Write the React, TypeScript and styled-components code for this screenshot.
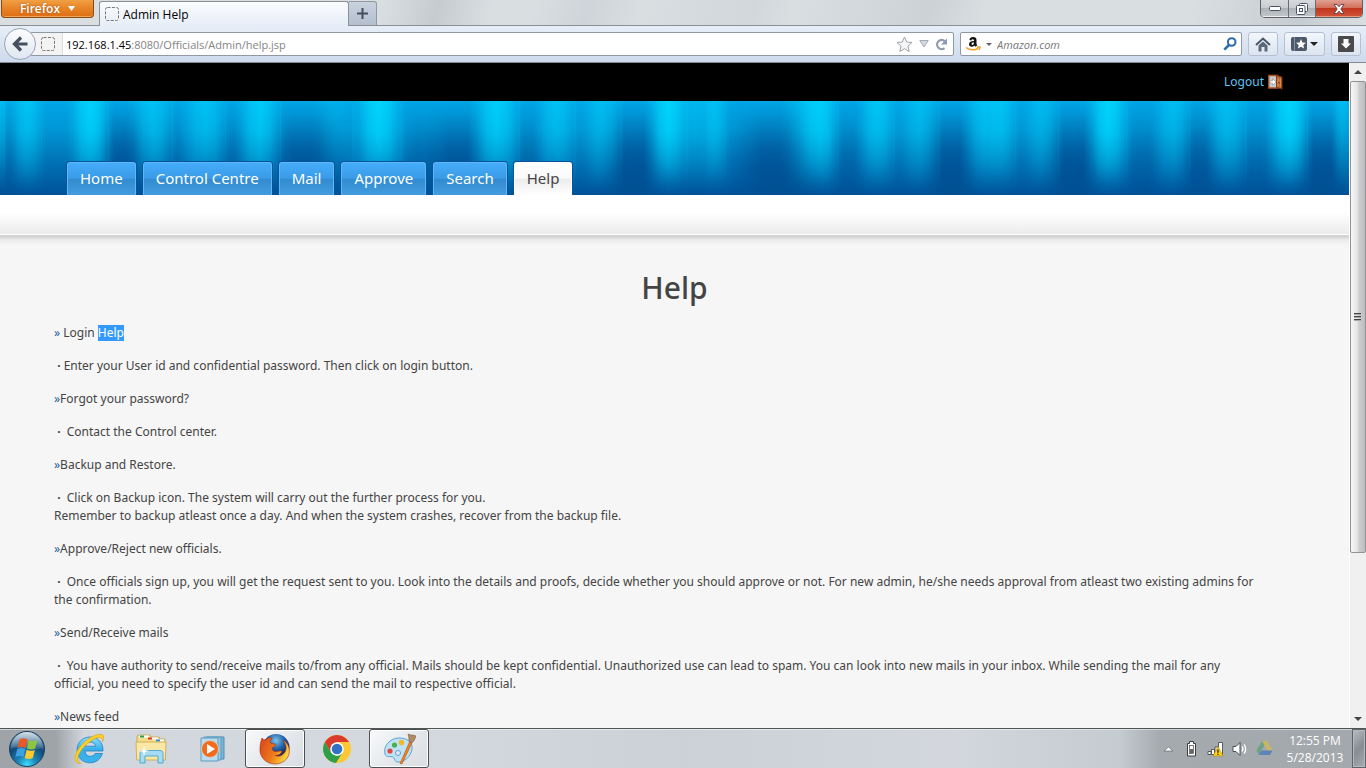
import React from 'react';
import styled, { createGlobalStyle, css } from 'styled-components';

const uiFont = "'Open Sans', 'Noto Sans', sans-serif";
const pageFont = "'Noto Sans', 'Open Sans', sans-serif";

const GlobalStyle = createGlobalStyle`
  *, *::before, *::after { box-sizing: border-box; }
  body { margin: 0; font-family: ${pageFont}; overflow: hidden; }
  button, input { font: inherit; color: inherit; }
  button { padding: 0; border: 0; background: none; cursor: pointer; }
  svg { display: block; flex: none; }
`;

const Screen = styled.div`
  display: flex;
  flex-direction: column;
  height: 100vh;
  font-family: ${uiFont};
  font-size: 11px;
`;

/* ---------- browser chrome ---------- */

const TitleBar = styled.header`
  flex: none;
  display: flex;
  align-items: flex-end;
  height: 26px;
  padding-right: 3px;
  border-bottom: 1px solid #8c9096;
  background:
    linear-gradient(105deg, transparent 0 28%, rgba(160, 170, 176, 0.35) 32%, transparent 36%, transparent 39%, rgba(190, 198, 204, 0.4) 43%, transparent 47%, rgba(200, 205, 212, 0.4) 55%, transparent 58%, rgba(185, 192, 198, 0.4) 68%, transparent 72%, transparent 87%, rgba(170, 180, 187, 0.4) 95%, transparent),
    #d9dee1;
`;

const FirefoxButton = styled.button`
  display: flex;
  align-items: center;
  align-self: flex-start;
  justify-content: center;
  gap: 8px;
  width: 93px;
  height: 18px;
  margin: 0 5px 0 1px;
  border: 1px solid #8c4a12;
  border-top: 0;
  border-radius: 0 0 4px 4px;
  background: linear-gradient(#f0a043, #e8862a 45%, #de6d12);
  box-shadow: inset 0 -1px 0 #f0a35c;
  color: #fff;
  font-size: 12px;
  font-weight: 600;
  line-height: 16px;
  text-shadow: 0 0 2px #8c4a12;
`;

const BrowserTab = styled.div`
  display: flex;
  align-items: center;
  gap: 4px;
  width: 250px;
  height: 25px;
  margin-bottom: -1px;
  padding: 0 5px;
  border: 1px solid #8c9096;
  border-bottom: 0;
  border-radius: 3px 3px 0 0;
  background: linear-gradient(#fbfcfe, #e6edf7);
  color: #000;
  font-size: 12px;
`;

const NewTab = styled.button`
  display: flex;
  align-items: center;
  justify-content: center;
  width: 28px;
  height: 24px;
  border: 1px solid #9299a3;
  border-width: 1px 1px 0 0;
  border-radius: 0 3px 0 0;
  background: linear-gradient(#c9d2df, #b4bfce);
`;

const WindowControls = styled.div`
  display: flex;
  align-self: flex-start;
  height: 18px;
  margin-left: auto;
  border: 1px solid #5d6167;
  border-top: 0;
  border-radius: 0 0 5px 5px;
  overflow: hidden;
`;

const WindowButton = styled.button<{ $close?: boolean }>`
  display: flex;
  align-items: center;
  justify-content: center;
  width: 27px;
  background: linear-gradient(#d7dadd, #c9cdd1 45%, #aeb3b8 50%, #c3c7cb);
  box-shadow: inset 0 -1px 0 #eceef0;
  & + & { border-left: 1px solid #6a6e74; }
  ${(p) => p.$close && css`
    width: 47px;
    background: linear-gradient(#e0a093, #d4705b 45%, #c0371d 50%, #d0553a);
    box-shadow: inset 0 -1px 0 #eb9a80;
  `}
`;

const NavBar = styled.div`
  flex: none;
  display: flex;
  align-items: center;
  gap: 6px;
  height: 37px;
  padding: 0 5px 0 4px;
  border-bottom: 1px solid #84888f;
  background: linear-gradient(#e7eef8, #cddaec);
`;

const BackButton = styled.button`
  z-index: 1;
  display: flex;
  align-items: center;
  justify-content: center;
  width: 32px;
  height: 32px;
  margin-right: -12px;
  border: 1px solid #9ba5b3;
  border-radius: 50%;
  background: linear-gradient(#fdfdfe, #dfe7f2);
`;

const Field = styled.form<{ $search?: boolean }>`
  display: flex;
  align-items: center;
  height: 24px;
  border: 1px solid #9098a3;
  border-radius: 2px;
  background: #fff;
  ${(p) => p.$search
    ? css`flex: 0 0 282px; gap: 5px; padding: 0 4px;`
    : css`flex: 1; gap: 6px; padding-right: 5px;`}
`;

const SiteIdentity = styled.button`
  display: flex;
  align-items: center;
  align-self: stretch;
  width: 32px;
  margin-right: -3px;
  padding-left: 10px;
  border-right: 1px solid #dcdcdc;
  background: #f3f3f3;
`;

const Address = styled.label`
  display: flex;
  flex: 1;
  color: #000;
`;

const TextInput = styled.input`
  flex: 1;
  min-width: 0;
  padding: 0;
  border: 0;
  outline: 0;
  background: none;
  color: #858585;
  &::placeholder { color: #777; font-style: italic; opacity: 1; }
`;

const IconButton = styled.button`
  display: flex;
  align-items: center;
`;

const ToolButton = styled.button<{ $wide?: boolean }>`
  display: flex;
  align-items: center;
  justify-content: center;
  gap: 3px;
  width: ${(p) => (p.$wide ? 41 : 30)}px;
  height: 24px;
  border: 1px solid #b5c1d2;
  border-radius: 3px;
  background: linear-gradient(#f3f7fc, #dbe4f0);
`;

/* ---------- web page ---------- */

const Viewport = styled.div`
  flex: 1;
  display: flex;
  min-height: 0;
`;

const Page = styled.div`
  flex: 1;
  min-width: 0;
  overflow: hidden;
  background: #f6f6f6;
  color: #444;
  font-family: ${pageFont};
  font-size: 12px;
  line-height: 18px;
`;

const TopBar = styled.div`
  display: flex;
  align-items: center;
  justify-content: flex-end;
  height: 38px;
  padding-right: 66px;
  background: #000;
`;

const Logout = styled.a`
  display: flex;
  align-items: center;
  gap: 4px;
  color: #5cc3f2;
  text-decoration: none;
`;

const Banner = styled.div`
  display: grid;
  height: 94px;
  overflow: hidden;
  & > * { grid-area: 1 / 1; }
`;

const Curtain = styled.svg`
  width: 100%;
  height: 94px;
`;

const Tabs = styled.nav`
  z-index: 1;
  display: flex;
  align-items: flex-end;
  gap: 7px;
  padding-left: 67px;
`;

const TabLink = styled.a<{ $active?: boolean }>`
  height: 33px;
  padding: 0 12px;
  border: 1px solid #5cb8fa;
  border-bottom: 0;
  border-radius: 3px 3px 0 0;
  background: linear-gradient(#45acfb, #3a9be6 48%, #318bce 50%, #429cdf);
  box-shadow: 0 0 0 1px #07549a;
  color: #fff;
  font-size: 15px;
  line-height: 30px;
  text-decoration: none;
  ${(p) => p.$active && css`
    border-color: #fff;
    background: linear-gradient(#fff, #f9f9f9 48%, #ececec 50%, #fff);
    color: #444;
  `}
`;

const SubBar = styled.div`
  height: 40px;
  border-bottom: 1px solid #fff;
  background: linear-gradient(#fff 45%, #ececec);
`;

const Main = styled.main`
  padding: 33px 54px 0;
  background: linear-gradient(#cfcfcf, #d6d6d6 2px, #ebebeb 5px, #f6f6f6 10px);
`;

const Heading = styled.h1`
  margin: 0 0 16px;
  font-size: 30px;
  font-weight: 500;
  line-height: 40px;
  text-align: center;
`;

const Paragraph = styled.p`
  margin: 0 0 15px;
`;

const Marker = styled.a`
  color: #1d5fa0;
  text-decoration: none;
`;

const Selected = styled.mark`
  display: inline-block;
  height: 16px;
  background: #3399ff;
  color: #fff;
  line-height: 16px;
`;

const ScrollBar = styled.div`
  flex: none;
  display: flex;
  flex-direction: column;
  width: 17px;
  border-left: 1px solid #fff;
  background: #f0f0f0;
`;

const ScrollArrow = styled.button`
  display: flex;
  align-items: center;
  justify-content: center;
  height: 18px;
`;

const ScrollTrack = styled.div`
  flex: 1;
`;

const ScrollThumb = styled.div`
  display: flex;
  align-items: center;
  justify-content: center;
  height: 75%;
  border: 1px solid #929292;
  border-radius: 2px;
  background: linear-gradient(90deg, #f6f6f6, #e4e4e6 45%, #cfcfd2 55%, #bcbcc0);
`;

/* ---------- taskbar ---------- */

const TaskBar = styled.footer`
  flex: none;
  display: flex;
  height: 40px;
  border-top: 1px solid #51554f;
  background:
    linear-gradient(90deg, #9fa4a8 0, #9fa4a8 56px, transparent 84px),
    linear-gradient(90deg, #d1d6de 0, #d4d9df 30%, #ccd1d8 50%, #d3d7dd 70%, #c4cbd1 82%, #a4aaae 85%, #a2a8ac 100%);
  box-shadow: inset 0 1px 0 rgba(255, 255, 255, 0.5);
`;

const StartButton = styled.button`
  display: flex;
  align-items: center;
  justify-content: center;
  width: 54px;
  margin-right: 5px;
`;

const TaskButton = styled.button<{ $open?: boolean }>`
  display: flex;
  align-items: center;
  justify-content: center;
  width: 60px;
  margin-right: 2px;
  border: 1px solid transparent;
  border-radius: 3px;
  ${(p) => p.$open && css`
    border-color: #4c5054;
    background: linear-gradient(135deg, #f8f9fa, #e2e6ea 60%, #dadee3);
    box-shadow: inset 0 0 0 1px #fff;
  `}
`;

const Tray = styled.div`
  display: flex;
  align-items: center;
  gap: 8px;
  margin-left: auto;
`;

const Clock = styled.time`
  width: 64px;
  margin: 0 5px 0 2px;
  color: #fff;
  font-size: 12px;
  line-height: 17px;
  text-align: center;
  white-space: nowrap;
`;

const ShowDesktop = styled.button`
  align-self: stretch;
  width: 14px;
  margin-left: -8px;
  border: 1px solid #5e6468;
  background: linear-gradient(135deg, #b9bec2, #868d92 50%, #a6acb0);
  box-shadow: inset 0 0 0 1px #b4b9bd;
`;

/* ---------- drawings ---------- */

const Caret = ({ color, w = 8, h = 5 }: { color: string; w?: number; h?: number }) => (
  <svg width={w} height={h} viewBox="0 0 8 5" preserveAspectRatio="none"><path d="M0 0h8L4 5z" fill={color} /></svg>
);

const BlankFavicon = () => (
  <svg width="14" height="14" viewBox="0 0 14 14">
    <rect x=".5" y=".5" width="13" height="13" rx="2" fill="none" stroke="#777" strokeDasharray="3 1.4" />
  </svg>
);

/* [centre, half width, strength] of each light fold */
const lights: [number, number, number][] = [
  [0, 10, 0.5], [27, 20, 0.65], [90, 24, 0.95], [152, 26, 0.6], [205, 26, 0.6], [260, 26, 0.8], [335, 24, 0.25], [379, 28, 1],
  [497, 28, 0.85], [557, 24, 0.6], [603, 24, 0.5], [669, 24, 1], [695, 20, 0.4], [715, 16, 0.6], [820, 24, 0.9],
  [805, 26, 0.4], [878, 22, 0.7], [921, 24, 0.5], [985, 24, 0.6], [1002, 20, 0.6], [1043, 22, 0.45], [1109, 24, 1],
  [1174, 22, 0.5], [1228, 24, 0.55], [1290, 24, 1], [1343, 12, 0.5],
];
const darks: [number, number, number][] = [
  [0, 24, 0.4], [125, 30, 1], [172, 16, 0.3], [232, 16, 0.4], [307, 46, 1], [425, 24, 0.5], [458, 32, 1], [528, 16, 0.4],
  [633, 34, 1], [776, 46, 1], [847, 18, 0.4], [951, 30, 1], [1074, 32, 1], [1143, 18, 0.4], [1200, 24, 0.8], [1256, 18, 0.3],
  [1325, 32, 1],
];

const CurtainArt = () => (
  <Curtain viewBox="0 0 1350 94" preserveAspectRatio="none" aria-hidden="true">
    <defs>
      <linearGradient id="cBase" x2="0" y2="1">
        <stop stopColor="#00a6e6" /><stop offset=".3" stopColor="#0097d6" />
        <stop offset=".65" stopColor="#0072b5" /><stop offset="1" stopColor="#005298" />
      </linearGradient>
      <linearGradient id="cLight">
        <stop stopColor="#00ccf6" stopOpacity="0" /><stop offset=".14" stopColor="#00ccf6" stopOpacity=".3" />
        <stop offset=".32" stopColor="#00d2fa" stopOpacity=".85" />
        <stop offset=".5" stopColor="#00d8ff" /><stop offset=".68" stopColor="#00d2fa" stopOpacity=".85" />
        <stop offset=".86" stopColor="#00ccf6" stopOpacity=".3" /><stop offset="1" stopColor="#00ccf6" stopOpacity="0" />
      </linearGradient>
      <linearGradient id="cDark">
        <stop stopColor="#004f93" stopOpacity="0" /><stop offset=".35" stopColor="#004f93" stopOpacity=".85" />
        <stop offset=".65" stopColor="#004f93" stopOpacity=".85" /><stop offset="1" stopColor="#004f93" stopOpacity="0" />
      </linearGradient>
      <linearGradient id="fadeDown" x2="0" y2="1">
        <stop stopColor="#eee" /><stop offset=".35" stopColor="#ccc" /><stop offset=".65" stopColor="#777" />
        <stop offset=".88" stopColor="#1c1c1c" /><stop offset="1" stopColor="#000" />
      </linearGradient>
      <linearGradient id="fadeUp" x2="0" y2="1">
        <stop stopColor="#000" /><stop offset=".15" stopColor="#2a2a2a" /><stop offset=".55" stopColor="#ccc" />
        <stop offset=".75" stopColor="#fff" />
      </linearGradient>
      <mask id="mDown"><rect width="1350" height="94" fill="url(#fadeDown)" /></mask>
      <mask id="mUp"><rect width="1350" height="94" fill="url(#fadeUp)" /></mask>
    </defs>
    <rect width="1350" height="94" fill="url(#cBase)" />
    <g mask="url(#mUp)">
      {darks.map(([c, r, o]) => <rect key={c} x={c - r} width={r * 2} height="94" fill="url(#cDark)" opacity={o} />)}
    </g>
    <g mask="url(#mDown)">
      {lights.map(([c, r, o]) => <rect key={c} x={c - r} width={r * 2} height="94" fill="url(#cLight)" opacity={o} />)}
      {lights.map(([c, r]) => <rect key={c} x={c + r - 6} width="1" height="94" fill="#19c4f4" opacity=".25" />)}
    </g>
  </Curtain>
);

const DoorIcon = () => (
  <svg width="15" height="16" viewBox="0 0 15 16">
    <path d="M.8 1.500h9v12.500h-9z" fill="#c9c9cf" stroke="#b0582a" strokeWidth="1.300" />
    <path d="M2 6.800h2.500V4.600L8.200 8l-3.700 3.400V9.200H2z" fill="#fff" stroke="#8a8a90" strokeWidth=".6" />
    <path d="M8.500 1.500l5.500 1.500v12l-5.500-1.500z" fill="#b9642c" stroke="#74350f" strokeWidth=".9" />
    <path d="M10 4v8.500M12.300 4.500v8.500" stroke="#dc9354" /><path d="M11 8v1.500" stroke="#4a1e05" />
  </svg>
);

const StartOrb = () => (
  <svg width="38" height="38" viewBox="0 0 38 38">
    <defs>
      <radialGradient id="orb" cx=".5" cy=".95" r=".9">
        <stop stopColor="#3fe0ff" /><stop offset=".3" stopColor="#1a86b8" /><stop offset=".65" stopColor="#134a78" /><stop offset="1" stopColor="#4a7ba0" />
      </radialGradient>
      <linearGradient id="orbShine" x2="0" y2="1"><stop stopColor="#fff" stopOpacity=".75" /><stop offset="1" stopColor="#fff" stopOpacity=".1" /></linearGradient>
    </defs>
    <circle cx="19" cy="19" r="17.500" fill="url(#orb)" stroke="#1d3f5c" />
    <path d="M3 18a16 16 0 0 1 32 0c-9 3-22-1-32 0z" fill="url(#orbShine)" />
    <path d="M11.500 9.500c3-1.700 5.500-1.300 8 0L17.700 17.800c-2.500-1.300-5-1.500-8-.2z" fill="#ea5a26" />
    <path d="M20.800 10c2.800 1.300 5.500 1.300 8.500.2L27.200 18.500c-2.700 1.200-5.500 1.200-8.200-.1z" fill="#8cc63e" />
    <path d="M9.300 19c2.800-1.400 5.500-1.200 8 .1l-1.900 8c-2.500-1.300-5.200-1.400-8-.1z" fill="#3fa0e0" />
    <path d="M18.600 19.800c2.700 1.300 5.500 1.300 8.300.1l-2.100 8.200c-2.700 1.200-5.500 1.200-8.100-.1z" fill="#fcc92e" />
  </svg>
);

const IeIcon = () => (
  <svg width="32" height="32" viewBox="0 0 32 32">
    <defs><linearGradient id="ie" x2="0" y2="1"><stop stopColor="#8edcf9" /><stop offset=".5" stopColor="#35aeea" /><stop offset="1" stopColor="#3bb4ec" /></linearGradient></defs>
    <path d="M30 18H12c.3 3.500 2.400 5.300 5.200 5.300 2.300 0 3.900-1 4.800-2.800h7.400C27.700 26.300 23 29.800 17 29.800 9.500 29.800 4 24.500 4 17S9.500 4 17 4s13 5.300 13 13zM22.500 13.200C22 10.700 20 9 17.200 9s-4.700 1.700-5.100 4.200z" fill="url(#ie)" stroke="#2583bf" strokeWidth=".8" fillRule="evenodd" />
    <path d="M8 30.500C0 31 .5 22 6.500 14.500 13 6 22.500.800 28 1.300c3.400.400 3.200 4 1.500 7.500.300-2.700-.500-4.300-3-4.300C21.500 4.500 13 10.500 8 17.500 4 23.500 3 29 8 30.500z" fill="#fbd127" stroke="#d9a010" strokeWidth=".6" />
  </svg>
);

const ExplorerIcon = () => (
  <svg width="34" height="32" viewBox="0 0 34 32">
    <path d="M3 6V3l2-1h11l1 2h8l1 2h5v6H3z" fill="#f5dc8a" stroke="#c39f3f" strokeWidth=".8" />
    <path d="M5 3.500h10M16 5.500h8M24 7.500h6" stroke="#fff" strokeWidth="2" />
    <path d="M6 3.500h4" stroke="#24a148" strokeWidth="2" /><path d="M14 5.500h4" stroke="#d9372a" strokeWidth="2" /><path d="M22 7.500h4" stroke="#2b8fe0" strokeWidth="2" />
    <path d="M2 9h30l-.7 18H2.700z" fill="#f9e7a6" stroke="#c9a548" strokeWidth=".8" />
    <path d="M6 30V20.500c0-2 1-3 3-3h17c2 0 3 1 3 3V30h-5v-7H11v7z" fill="#a5dcf3" stroke="#4ba3cd" strokeWidth=".9" />
    <path d="M10 13l1 4 4 1-4 1-1 4-1-4-4-1 4-1z" fill="#fff" />
  </svg>
);

const MediaIcon = () => (
  <svg width="30" height="28" viewBox="0 0 30 28">
    <path d="M9 2h17v22H9z" fill="#7db6d5" stroke="#4f8fb4" /><path d="M6 2h17v23H6z" fill="#9cc9e2" stroke="#5c9bbe" />
    <path d="M3 3h17v23H3z" fill="#b9dcee" stroke="#5c9bbe" />
    <circle cx="12" cy="14" r="8.500" fill="#f26a1b" stroke="#d9d9d9" strokeWidth=".8" /><path d="M9 9l8 5-8 5z" fill="#fff" />
  </svg>
);

const FirefoxIcon = () => (
  <svg width="32" height="32" viewBox="0 0 32 32">
    <defs>
      <radialGradient id="globe" cx=".5" cy=".25"><stop stopColor="#7cc4ee" /><stop offset=".6" stopColor="#2563a8" /><stop offset="1" stopColor="#16316c" /></radialGradient>
      <linearGradient id="fox" x2="1" y2=".4"><stop stopColor="#d8421a" /><stop offset=".6" stopColor="#ec7a1c" /><stop offset="1" stopColor="#fbd03a" /></linearGradient>
    </defs>
    <circle cx="17" cy="14.500" r="13.500" fill="url(#globe)" />
    <path d="M3 5c1 1.500 2 2 4 1.800C9 4.500 11 4.500 13 5l-2 3.500 1 2 4.500.5c.5 2-2 2.800-3.500 4 .2 3 2.500 4 5 3.500 2-.4 3.500-1 5-.2-1 3-4 4.500-7 4 5 2.500 10-1 11-6 .5-3-.5-6-3-9 4 2 5.500 5 6 8C32 24 25 31 16 31 7 31 0 24 1 15c0-4 1-7 2-10z" fill="url(#fox)" stroke="#a82f0f" strokeWidth=".6" />
  </svg>
);

const ChromeIcon = () => (
  <svg width="30" height="30" viewBox="0 0 30 30">
    <circle cx="15" cy="15" r="14" fill="#fcc934" />
    <path d="M15 8h12.100A14 14 0 0 0 2.900 8l6 10.500z" fill="#db3b2d" />
    <path d="M2.900 8A14 14 0 0 0 14 29l6.500-10.500L15 22l-6-3.500z" fill="#2f9e48" />
    <circle cx="15" cy="15" r="6.800" fill="#fff" /><circle cx="15" cy="15" r="5.300" fill="#2f74c4" />
  </svg>
);

const PaintIcon = () => (
  <svg width="34" height="32" viewBox="0 0 34 32">
    <path d="M17 5c8 0 14 4 13 11-1 8-8 13-14 13-4 0-3-4-5-5s-7 1-8-3C1 13 8 5 17 5z" fill="#bfe2f5" stroke="#5aa3d0" />
    <circle cx="16" cy="20" r="2.500" fill="#e6eaf0" stroke="#5aa3d0" />
    <circle cx="8" cy="18" r="2.600" fill="#e2483c" /><circle cx="12.500" cy="12" r="2.600" fill="#49b14b" /><circle cx="19.500" cy="9.500" r="2.700" fill="#f4b52a" />
    <path d="M27.500 9l2.300 1.200L20 31l-2-.5z" fill="#f08127" stroke="#b3580f" strokeWidth=".6" />
    <path d="M26 1c2 1.500 5 .5 8 2-1 3-2 5-4 7l-3-1.500c0-2 0-5-1-7.500z" fill="#b08a62" stroke="#7e5c3a" strokeWidth=".6" />
  </svg>
);

const tabs = ['Home', 'Control Centre', 'Mail', 'Approve', 'Search', 'Help'];

const Topic = ({ children }: { children: React.ReactNode }) => (
  <Paragraph><Marker href="#topic">»</Marker>{children}</Paragraph>
);

const Answer = ({ children }: { children: React.ReactNode }) => (
  <Paragraph>&nbsp;<b>·</b>&nbsp;{children}</Paragraph>
);

export default function App() {
  return (
    <Screen>
      <GlobalStyle />
      <TitleBar>
        <FirefoxButton>Firefox <Caret color="#fff" w={7} h={5} /></FirefoxButton>
        <BrowserTab><BlankFavicon />Admin Help</BrowserTab>
        <NewTab aria-label="New tab">
          <svg width="11" height="11" viewBox="0 0 11 11"><path d="M5.500 0v11M0 5.500h11" stroke="#454f5c" strokeWidth="2" /></svg>
        </NewTab>
        <WindowControls>
          <WindowButton aria-label="Minimize">
            <svg width="12" height="5" viewBox="0 0 12 5"><rect x=".5" y=".5" width="11" height="4" rx="1" fill="#fff" stroke="#4d5166" /></svg>
          </WindowButton>
          <WindowButton aria-label="Restore">
            <svg width="12" height="12" viewBox="0 0 12 12" fill="#fff" stroke="#4d5166">
              <rect x="3.500" y=".5" width="8" height="8" rx="1" /><rect x=".5" y="2.500" width="8.500" height="9" rx="1" /><rect x="3.500" y="5.500" width="3" height="3" />
            </svg>
          </WindowButton>
          <WindowButton $close aria-label="Close">
            <svg width="12" height="10" viewBox="0 0 12 10"><path d="M1 .5h3l2 2.300L8 .5h3L7.800 5 11 9.500H8L6 7.200 4 9.500H1L4.200 5z" fill="#fff" stroke="#5a3c44" strokeWidth=".9" /></svg>
          </WindowButton>
        </WindowControls>
      </TitleBar>

      <NavBar>
        <BackButton aria-label="Back">
          <svg width="16" height="16" viewBox="0 0 16 16"><path d="M15.500 8H3M9 1.500L2.500 8 9 14.500" fill="none" stroke="#44505f" strokeWidth="3.200" /></svg>
        </BackButton>
        <Field onSubmit={(e) => e.preventDefault()}>
          <SiteIdentity type="button" aria-label="Site identity"><BlankFavicon /></SiteIdentity>
          <Address>
            <span>192.168.1.45</span>
            <TextInput defaultValue=":8080/Officials/Admin/help.jsp" aria-label="Address" />
          </Address>
          <IconButton type="button" aria-label="Bookmark">
            <svg width="17" height="17" viewBox="0 0 17 17"><path d="M8.500 1l2.200 5 5.300.5-4 3.600 1.200 5.400-4.700-2.800-4.700 2.800L5 10.100 1 6.500 6.300 6z" fill="#f6f6f6" stroke="#a0a4a9" /></svg>
          </IconButton>
          <IconButton type="button" aria-label="History">
            <svg width="10" height="8" viewBox="0 0 10 8"><path d="M.8.500h8.400L5 7z" fill="#d5dae2" stroke="#a3abb8" /></svg>
          </IconButton>
          <IconButton type="button" aria-label="Reload">
            <svg width="13" height="13" viewBox="0 0 13 13"><path d="M9.500 10.200A4.600 4.600 0 1 1 9.800 3.200" fill="none" stroke="#8f9cab" strokeWidth="2.200" /><path d="M12 .5v6H6z" fill="#8f9cab" /></svg>
          </IconButton>
        </Field>
        <Field $search onSubmit={(e) => e.preventDefault()}>
          <svg width="16" height="16" viewBox="0 0 16 16">
            <path d="M4.500 4C4.700 1.800 6 1 8 1c2.300 0 3.500 1 3.500 3v3.500c0 .8.300 1.200.8 1.700l-1.700 1.500c-.5-.3-.9-.8-1.200-1.300-1.800 2-5.400 1.600-5.400-1.200 0-2.400 2-3.100 5-3.200 0-1-.2-1.700-1.200-1.700-.8 0-1.200.4-1.400 1.200zM9 6.600c-1.500 0-2.400.4-2.400 1.500 0 1.500 2.400 1.400 2.400-1.500z" fill="#111" fillRule="evenodd" />
            <path d="M1 11.500c4 3 9 3 12 .8M12 11h3l-1 3" fill="none" stroke="#f59a23" strokeWidth="1.500" />
          </svg>
          <Caret color="#666" w={6} h={3} />
          <TextInput placeholder="Amazon.com" aria-label="Search" />
          <IconButton type="submit" aria-label="Go">
            <svg width="14" height="14" viewBox="0 0 14 14" fill="none" stroke="#2e6cab"><circle cx="8.700" cy="5" r="3.800" strokeWidth="2" /><path d="M6 8L1.300 12.700" strokeWidth="2.600" /></svg>
          </IconButton>
        </Field>
        <ToolButton aria-label="Home">
          <svg width="16" height="15" viewBox="0 0 16 15"><path d="M1 8l7-6.500L15 8" fill="none" stroke="#4a5664" strokeWidth="2" /><path d="M3.500 8.500L8 4.500l4.500 4V14.500h-3V10h-3v4.500h-3z" fill="#5b6876" /></svg>
        </ToolButton>
        <ToolButton $wide aria-label="Bookmarks">
          <svg width="16" height="14" viewBox="0 0 16 14"><rect width="16" height="14" rx="2" fill="#4b5968" /><path d="M3.500 0v14" stroke="#8793a0" /><path d="M10 2l1.400 3.400 3.600.3-2.700 2.300.8 3.600L10 9.700l-3.100 1.900.8-3.600L5 5.700l3.600-.3z" fill="#fff" /></svg>
          <Caret color="#222" w={8} h={4} />
        </ToolButton>
        <ToolButton aria-label="Downloads">
          <svg width="16" height="16" viewBox="0 0 16 16"><rect width="16" height="16" rx="1" fill="#4a4a4a" /><path d="M5.500 3h5v4.500H13L8 12.500 3 7.500h2.500z" fill="#fff" /></svg>
        </ToolButton>
      </NavBar>

      <Viewport>
        <Page>
          <TopBar><Logout href="#logout">Logout <DoorIcon /></Logout></TopBar>
          <Banner>
            <CurtainArt />
            <Tabs>
              {tabs.map((t) => <TabLink key={t} href={`#${t}`} $active={t === 'Help'}>{t}</TabLink>)}
            </Tabs>
          </Banner>
          <SubBar />
          <Main>
            <Heading>Help</Heading>
            <Topic> Login <Selected>Help</Selected></Topic>
            <Answer>Enter your User id and confidential password. Then click on login button.</Answer>
            <Topic>Forgot your password?</Topic>
            <Answer> Contact the Control center.</Answer>
            <Topic>Backup and Restore.</Topic>
            <Answer>
              {' '}Click on Backup icon. The system will carry out the further process for you.<br />
              Remember to backup atleast once a day. And when the system crashes, recover from the backup file.
            </Answer>
            <Topic>Approve/Reject new officials.</Topic>
            <Answer>
              {' '}Once officials sign up, you will get the request sent to you. Look into the details and proofs, decide whether you should approve or not. For new admin, he/she needs approval from atleast two existing admins for<br />
              the confirmation.
            </Answer>
            <Topic>Send/Receive mails</Topic>
            <Answer>
              {' '}You have authority to send/receive mails to/from any official. Mails should be kept confidential. Unauthorized use can lead to spam. You can look into new mails in your inbox. While sending the mail for any<br />
              official, you need to specify the user id and can send the mail to respective official.
            </Answer>
            <Topic>News feed</Topic>
          </Main>
        </Page>
        <ScrollBar>
          <ScrollArrow aria-label="Scroll up"><svg width="8" height="4" viewBox="0 0 8 4"><path d="M0 4h8L4 0z" fill="#444" /></svg></ScrollArrow>
          <ScrollTrack>
            <ScrollThumb>
              <svg width="8" height="9" viewBox="0 0 8 9"><path d="M0 1.500h7M0 4.500h7M0 7.500h7" stroke="#444" /><path d="M0 2.500h7M0 5.500h7M0 8.500h7" stroke="#aaa" /></svg>
            </ScrollThumb>
          </ScrollTrack>
          <ScrollArrow aria-label="Scroll down"><Caret color="#444" w={8} h={4} /></ScrollArrow>
        </ScrollBar>
      </Viewport>

      <TaskBar>
        <StartButton aria-label="Start"><StartOrb /></StartButton>
        <TaskButton aria-label="Internet Explorer"><IeIcon /></TaskButton>
        <TaskButton aria-label="Windows Explorer"><ExplorerIcon /></TaskButton>
        <TaskButton aria-label="Media Player"><MediaIcon /></TaskButton>
        <TaskButton $open aria-label="Firefox"><FirefoxIcon /></TaskButton>
        <TaskButton aria-label="Chrome"><ChromeIcon /></TaskButton>
        <TaskButton $open aria-label="Paint"><PaintIcon /></TaskButton>
        <Tray>
          <IconButton aria-label="Show hidden icons">
            <svg width="12" height="6" viewBox="0 0 12 6"><path d="M1 5l4.500-4L10 5z" fill="#fff" stroke="#666" strokeWidth=".7" /></svg>
          </IconButton>
          <svg width="16" height="18" viewBox="0 0 16 18">
            <path d="M6.500 1.500h4v2h2v12.500h-8V3.500h2z" fill="#fff" stroke="#3c3f42" /><rect x="6.500" y="5.500" width="4" height="8" fill="#fff" stroke="#3c3f42" strokeWidth=".7" /><rect x="7" y="9" width="3" height="4" fill="#666" />
          </svg>
          <svg width="17" height="16" viewBox="0 0 17 16">
            <path d="M1 10.500h3v3H1zM4.500 8.500h3v5h-3zM8 6h3v7.500H8zM11.500 1.500h4v12h-4z" fill="#fff" stroke="#4b4e51" strokeWidth=".9" />
            <path d="M11 5.500l5 9.500H6z" fill="#fcd116" stroke="#b18c00" strokeWidth=".6" /><path d="M11 8.500v3.300M11 12.800v1.200" stroke="#222" strokeWidth="1.300" />
          </svg>
          <svg width="16" height="16" viewBox="0 0 16 16">
            <path d="M1 5.500h3L8 1.500v13L4 10.500H1z" fill="#fff" stroke="#4b4e51" /><path d="M10 5.500c1.200 1.500 1.200 3.500 0 5M12 3.500c2.200 2.500 2.200 6.500 0 9" fill="none" stroke="#fff" strokeWidth="1.300" />
          </svg>
          <svg width="17" height="15" viewBox="0 0 17 15">
            <path d="M6 0h5l-5.500 9.500L3 14 .5 9.500z" fill="#6fa287" /><path d="M6 0h5l5.500 9.500h-5z" fill="#c9b562" /><path d="M5.500 9.500h11L14 14H3z" fill="#5c84bb" />
          </svg>
          <Clock>12:55 PM<br />5/28/2013</Clock>
          <ShowDesktop aria-label="Show desktop" />
        </Tray>
      </TaskBar>
    </Screen>
  );
}
